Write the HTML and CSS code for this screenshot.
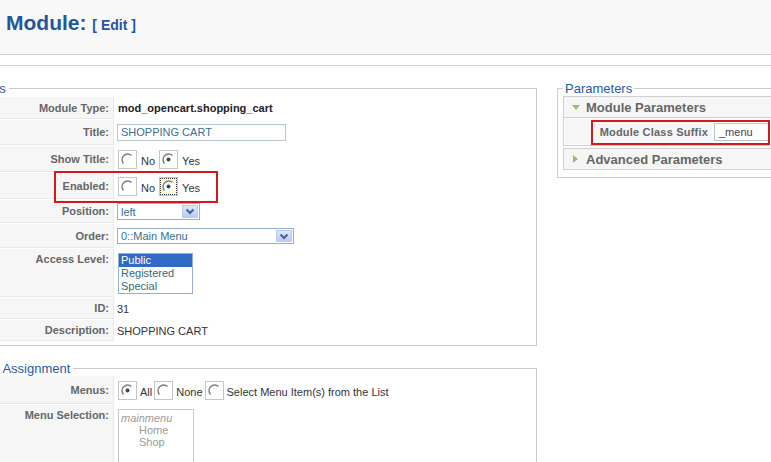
FILE: index.html
```html
<!DOCTYPE html>
<html lang="en">
<head>
<meta charset="utf-8">
<title>Module: [ Edit ]</title>
<link rel="stylesheet" href="styles.css">
</head>
<body>
<div class="toolbar">
  <h1 class="page-title">Module: <small>[ Edit ]</small></h1>
</div>
<div class="submenu"></div>

<div class="content">
  <div class="col-left">
    <fieldset class="box details">
      <legend>Details</legend>
      <table class="admintable">
        <tr class="h-type">
          <td class="key">Module Type:</td>
          <td class="val"><strong class="modtype">mod_opencart.shopping_cart</strong></td>
        </tr>
        <tr class="h-title">
          <td class="key">Title:</td>
          <td class="val"><span class="text-input title-input">SHOPPING CART</span></td>
        </tr>
        <tr class="h-show">
          <td class="key">Show Title:</td>
          <td class="val">
            <div class="radios">
              <span class="rb"><svg viewBox="0 0 13 13" width="13" height="13"><circle cx="6.5" cy="6.5" r="5.6" fill="#fff"/><path d="M10.5 2.5 A5.66 5.66 0 0 0 2.5 10.5" fill="none" stroke="#7d7d7d" stroke-width="1.4"/></svg></span><span class="rl">No</span>
              <span class="rb"><svg viewBox="0 0 13 13" width="13" height="13"><circle cx="6.5" cy="6.5" r="5.6" fill="#fff"/><path d="M10.5 2.5 A5.66 5.66 0 0 0 2.5 10.5" fill="none" stroke="#7d7d7d" stroke-width="1.4"/><circle cx="6.5" cy="6.5" r="2" fill="#22574a"/></svg></span><span class="rl">Yes</span>
            </div>
          </td>
        </tr>
        <tr class="h-enabled">
          <td class="key">Enabled:</td>
          <td class="val">
            <div class="radios">
              <span class="rb"><svg viewBox="0 0 13 13" width="13" height="13"><circle cx="6.5" cy="6.5" r="5.6" fill="#fff"/><path d="M10.5 2.5 A5.66 5.66 0 0 0 2.5 10.5" fill="none" stroke="#7d7d7d" stroke-width="1.4"/></svg></span><span class="rl">No</span>
              <span class="rb focus"><svg viewBox="0 0 13 13" width="13" height="13"><circle cx="6.5" cy="6.5" r="5.6" fill="#fff"/><path d="M10.5 2.5 A5.66 5.66 0 0 0 2.5 10.5" fill="none" stroke="#7d7d7d" stroke-width="1.4"/><circle cx="6.5" cy="6.5" r="2" fill="#22574a"/></svg></span><span class="rl">Yes</span>
            </div>
          </td>
        </tr>
        <tr class="h-pos">
          <td class="key">Position:</td>
          <td class="val">
            <div class="select sel-pos"><span>left</span><span class="sel-btn"><svg viewBox="0 0 10 7" width="10" height="7"><path d="M1.5 1.5 L5 5 L8.5 1.5" fill="none" stroke="#4b5f86" stroke-width="2"/></svg></span></div>
          </td>
        </tr>
        <tr class="h-order">
          <td class="key">Order:</td>
          <td class="val">
            <div class="select sel-order"><span>0::Main Menu</span><span class="sel-btn"><svg viewBox="0 0 10 7" width="10" height="7"><path d="M1.5 1.5 L5 5 L8.5 1.5" fill="none" stroke="#4b5f86" stroke-width="2"/></svg></span></div>
          </td>
        </tr>
        <tr class="h-access">
          <td class="key top">Access Level:</td>
          <td class="val">
            <div class="listbox">
              <div class="opt sel">Public</div>
              <div class="opt">Registered</div>
              <div class="opt">Special</div>
            </div>
          </td>
        </tr>
        <tr class="h-id">
          <td class="key">ID:</td>
          <td class="val">31</td>
        </tr>
        <tr class="h-desc">
          <td class="key">Description:</td>
          <td class="val">SHOPPING CART</td>
        </tr>
      </table>
    </fieldset>

    <fieldset class="box assign">
      <legend>Menu Assignment</legend>
      <table class="admintable">
        <tr class="h-menus">
          <td class="key">Menus:</td>
          <td class="val">
            <div class="radios menus">
              <span class="rb"><svg viewBox="0 0 13 13" width="13" height="13"><circle cx="6.5" cy="6.5" r="5.6" fill="#fff"/><path d="M10.5 2.5 A5.66 5.66 0 0 0 2.5 10.5" fill="none" stroke="#7d7d7d" stroke-width="1.4"/><circle cx="6.5" cy="6.5" r="2" fill="#22574a"/></svg></span><span class="rl">All</span>
              <span class="rb"><svg viewBox="0 0 13 13" width="13" height="13"><circle cx="6.5" cy="6.5" r="5.6" fill="#fff"/><path d="M10.5 2.5 A5.66 5.66 0 0 0 2.5 10.5" fill="none" stroke="#7d7d7d" stroke-width="1.4"/></svg></span><span class="rl">None</span>
              <span class="rb"><svg viewBox="0 0 13 13" width="13" height="13"><circle cx="6.5" cy="6.5" r="5.6" fill="#fff"/><path d="M10.5 2.5 A5.66 5.66 0 0 0 2.5 10.5" fill="none" stroke="#7d7d7d" stroke-width="1.4"/></svg></span><span class="rl">Select Menu Item(s) from the List</span>
            </div>
          </td>
        </tr>
        <tr class="h-msel">
          <td class="key top">Menu Selection:</td>
          <td class="val top">
            <div class="menu-list">
              <div class="grp">mainmenu</div>
              <div class="item">Home</div>
              <div class="item">Shop</div>
            </div>
          </td>
        </tr>
      </table>
    </fieldset>
  </div>

  <div class="col-right">
    <fieldset class="box params">
      <legend>Parameters</legend>
      <div class="panel">
        <h3 class="panel-title"><svg class="tri" viewBox="0 0 8 5" width="8" height="5"><path d="M0 0 H8 L4 5 Z" fill="#8bc46b"/></svg>Module Parameters</h3>
        <table class="paramlist">
          <tr>
            <td class="pkey">Module Class Suffix</td>
            <td class="pval"><span class="text-input suffix">_menu</span></td>
          </tr>
        </table>
      </div>
      <div class="panel">
        <h3 class="panel-title"><svg class="tri tri-right" viewBox="0 0 5 8" width="5" height="8"><path d="M0 0 V8 L5 4 Z" fill="#8bc46b"/></svg>Advanced Parameters</h3>
      </div>
    </fieldset>
  </div>
</div>

<div class="highlight hl-enabled"></div>
<div class="highlight hl-suffix"></div>
</body>
</html>
```

FILE: styles.css
```css
html, body {
  margin: 0;
  padding: 0;
  overflow: hidden;
  background: #fff;
}
body {
  width: 771px;
  height: 462px;
  position: relative;
  font-family: "Liberation Sans", Arial, sans-serif;
  font-size: 11px;
  color: #333;
}

/* header */
.toolbar {
  height: 54px;
  background: #f8f8f8;
  border-bottom: 1px solid #cfcfcf;
}
.page-title {
  margin: 0;
  padding: 12px 0 0 6px;
  font-size: 21px;
  line-height: 22px;
  font-weight: bold;
  color: #1f569c;
}
.page-title small {
  font-size: 14px;
}
.submenu {
  height: 10px;
  border-bottom: 1px solid #cfcfcf;
}

/* columns */
.content {
  display: flex;
  gap: 20px;
  padding-top: 16px;
}
.col-left {
  flex: none;
  width: 585px;
  margin-left: -48px;
}
.col-right {
  flex: none;
  width: 280px;
}

/* fieldsets */
fieldset.box {
  margin: 0;
  min-width: 0;
  border: 1px solid #ccc;
  padding: 0 10px 4px;
}
fieldset.box legend {
  padding: 0 3px;
  font-size: 13px;
  line-height: 13px;
  color: #2659a6;
}
fieldset.details {
  padding-top: 1px;
  padding-bottom: 3px;
}
fieldset.assign {
  margin-top: 16px;
  padding-bottom: 0;
}
fieldset.assign legend {
  padding-left: 4px;
}
fieldset.params {
  padding: 1px 5px 7px;
}
fieldset.params legend {
  padding: 0 2px;
}

/* form table */
.admintable {
  border-collapse: separate;
  border-spacing: 1px;
}
.admintable td {
  padding: 0;
  vertical-align: middle;
}
.admintable td.key {
  width: 145px;
  padding-right: 4px;
  background: #f6f6f6;
  border-bottom: 1px solid #e9e9e9;
  border-right: 1px solid #e9e9e9;
  text-align: right;
  font-weight: bold;
  color: #666;
}
.admintable td.val {
  padding-left: 2px;
  color: #333;
}
.admintable td.top {
  vertical-align: top;
  padding-top: 4px;
}
.modtype {
  color: #222;
  padding-left: 1px;
}
.h-type { height: 22px; }
.h-title { height: 25px; }
.h-show { height: 26px; }
.h-enabled { height: 26px; }
.h-pos { height: 23px; }
.h-order { height: 24px; }
.h-access { height: 48px; }
.h-id { height: 21px; }
.h-desc { height: 21px; }
.h-menus { height: 28px; }
.h-msel { height: 80px; }

/* inputs */
.text-input {
  display: block;
  box-sizing: border-box;
  height: 17px;
  border: 1px solid #bcc4cc;
  padding: 0 3px;
  line-height: 15px;
  color: #3b6e8f;
  background: #fff;
}
.title-input { width: 169px; }

.radios {
  display: flex;
  align-items: center;
  margin-left: 1px;
}
.rb {
  flex: none;
  box-sizing: border-box;
  width: 19px;
  height: 19px;
  border: 1px solid #c6c6c6;
  display: flex;
  align-items: center;
  justify-content: center;
  background: #fff;
}
.rb svg { display: block; }
.rb.focus {
  background: #fbf9dc;
  outline: 1px dotted #333;
  outline-offset: -2px;
}
.rl {
  margin: 3px 4px 0;
  color: #333;
}
.menus .rl { margin: 3px 2px 0 3px; }

.select {
  display: flex;
  align-items: center;
  justify-content: space-between;
  box-sizing: border-box;
  height: 17px;
  border: 1px solid #98aecb;
  padding: 0 1px 0 3px;
  color: #3b6e8f;
  background: #fff;
}
.sel-pos { width: 83px; }
.sel-order { width: 177px; height: 16px; }
.sel-btn {
  box-sizing: border-box;
  width: 16px;
  height: 13px;
  border: 1px solid #b9cbef;
  background: linear-gradient(#dce7fd, #b8ccf5);
  display: flex;
  align-items: center;
  justify-content: center;
}
.sel-order .sel-btn { height: 12px; }
.sel-btn svg { display: block; }

.listbox {
  box-sizing: border-box;
  width: 75px;
  border: 1px solid #98aecb;
  margin-left: 1px;
  background: #fff;
}
.opt {
  line-height: 13px;
  padding-left: 2px;
  color: #2f6b7a;
}
.opt.sel {
  background: #316ac5;
  color: #fff;
}

.menu-list {
  box-sizing: border-box;
  width: 76px;
  height: 70px;
  border: 1px solid #c8c8c8;
  margin-left: 1px;
  padding-top: 2px;
  color: #9a9a9a;
  background: #fff;
}
.menu-list .grp {
  line-height: 12px;
  padding-left: 2px;
  font-style: italic;
}
.menu-list .item {
  line-height: 12px;
  padding-left: 20px;
}

/* parameters panels */
.panel {
  border: 1px solid #d0d0d0;
  margin-bottom: 2px;
}
.panel:last-child { margin-bottom: 0; }
.panel-title {
  margin: 0;
  height: 20px;
  display: flex;
  align-items: center;
  padding-left: 8px;
  background: #f6f6f6;
  font-size: 13px;
  font-weight: bold;
  color: #666;
}
.panel .panel-title:not(:last-child) {
  border-bottom: 1px solid #d0d0d0;
}
.panel-title .tri {
  display: block;
  margin-right: 6px;
}
.panel-title .tri-right {
  margin-left: 1px;
  margin-right: 8px;
}
.paramlist {
  border-collapse: separate;
  border-spacing: 1px;
  width: 100%;
}
.paramlist tr { height: 25px; }
.paramlist td { padding: 0; vertical-align: middle; }
.paramlist .pkey {
  width: 143px;
  padding-right: 4px;
  background: #f6f6f6;
  text-align: right;
  font-weight: bold;
  color: #666;
  letter-spacing: 0.2px;
}
.paramlist .pval { padding-left: 1px; }
.suffix {
  width: 55px;
  height: 18px;
  line-height: 16px;
  padding-left: 4px;
  color: #444;
}

/* annotation highlights */
.highlight {
  position: absolute;
  box-sizing: border-box;
  border: 2px solid #d11a1f;
}
.hl-enabled {
  left: 54px;
  top: 171px;
  width: 164px;
  height: 32px;
}
.hl-suffix {
  left: 591px;
  top: 120px;
  width: 179px;
  height: 25px;
}
```
